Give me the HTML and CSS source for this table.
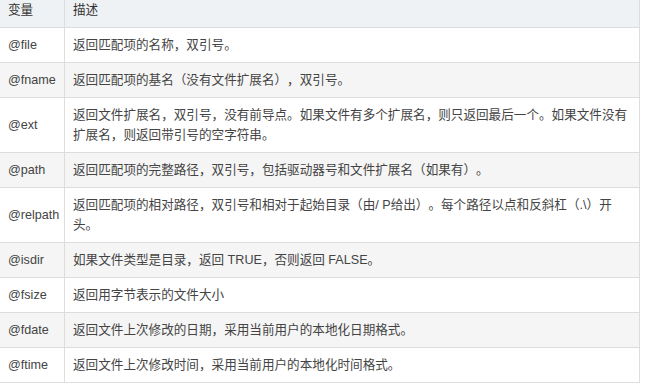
FILE: index.html
```html
<!DOCTYPE html>
<html lang="zh-CN">
<head>
<meta charset="utf-8">
<title>变量</title>
<link rel="stylesheet" href="styles.css">
</head>
<body>
<table class="vars">
  <colgroup>
    <col class="col-name">
    <col class="col-desc">
  </colgroup>
  <thead>
    <tr><th>变量</th><th>描述</th></tr>
  </thead>
  <tbody>
    <tr><td>@file</td><td>返回匹配项的名称，双引号。</td></tr>
    <tr><td>@fname</td><td>返回匹配项的基名（没有文件扩展名），双引号。</td></tr>
    <tr><td>@ext</td><td>返回文件扩展名，双引号，没有前导点。如果文件有多个扩展名，则只返回最后一个。如果文件没有扩展名，则返回带引号的空字符串。</td></tr>
    <tr><td>@path</td><td>返回匹配项的完整路径，双引号，包括驱动器号和文件扩展名（如果有）。</td></tr>
    <tr><td>@relpath</td><td>返回匹配项的相对路径，双引号和相对于起始目录（由/ P给出）。每个路径以点和反斜杠（.\）开头。</td></tr>
    <tr><td>@isdir</td><td>如果文件类型是目录，返回 TRUE，否则返回 FALSE。</td></tr>
    <tr><td>@fsize</td><td>返回用字节表示的文件大小</td></tr>
    <tr><td>@fdate</td><td>返回文件上次修改的日期，采用当前用户的本地化日期格式。</td></tr>
    <tr><td>@ftime</td><td>返回文件上次修改时间，采用当前用户的本地化时间格式。</td></tr>
  </tbody>
</table>
</body>
</html>
```

FILE: styles.css
```css
html, body {
  margin: 0;
  padding: 0;
  background: #ffffff;
}

body {
  font-family: "Liberation Sans", Arial, "Noto Sans CJK SC", sans-serif;
  font-size: 12.6px;
  line-height: 20px;
  color: #444444;
  text-spacing-trim: space-all;
}

.vars {
  border-collapse: collapse;
  table-layout: fixed;
  width: 640px;
  margin: -8px 0 0 -1px;
}

.col-name {
  width: 65px;
}

.col-desc {
  width: 575px;
}

.vars th,
.vars td {
  border: 1px solid #dddddd;
  padding: 7px 8px;
  text-align: left;
  vertical-align: middle;
}

.vars th {
  font-weight: normal;
  color: #333333;
  background: #eff2f5;
}

.vars tbody tr:nth-child(even) td {
  background: #f5f5f5;
}
```
